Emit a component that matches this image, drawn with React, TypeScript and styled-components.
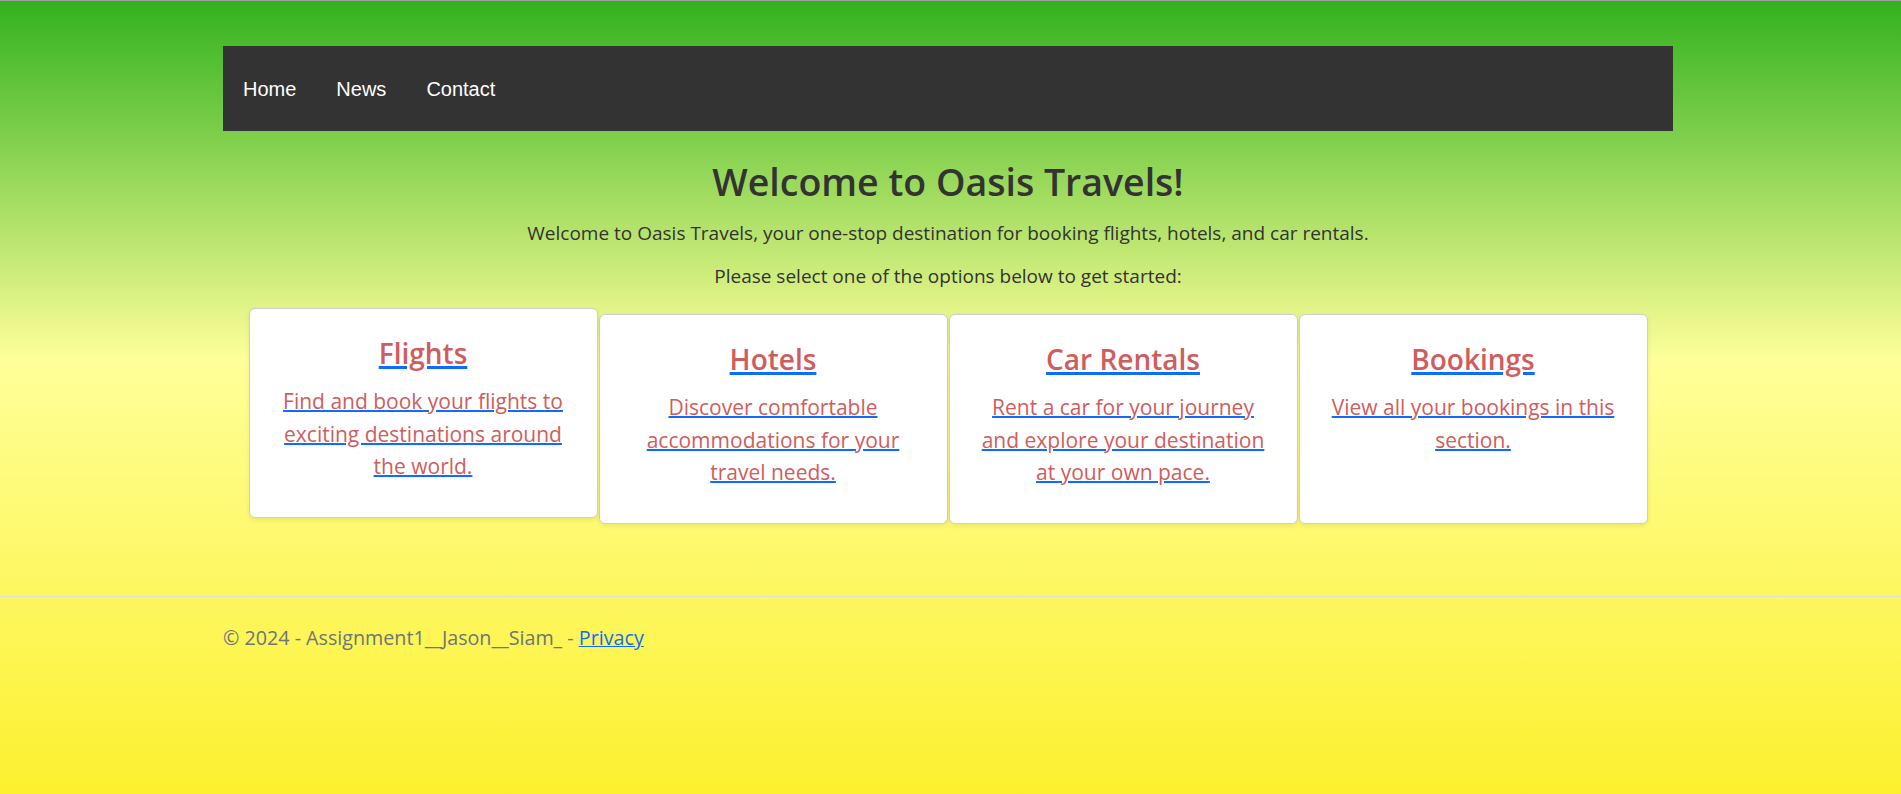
import React from "react";
import styled, { createGlobalStyle } from "styled-components";

const GlobalStyle = createGlobalStyle`
  html, body {
    margin: 0;
    padding: 0;
  }
  body {
    font-family: "Open Sans", "Noto Sans", sans-serif;
    color: #333333;
  }
  * { box-sizing: border-box; }
`;

const Page = styled.div`
  min-height: 100vh;
  border-top: 1px solid #9e9e9e;
  padding-right: 5px;
  background: linear-gradient(
    to bottom,
    #32b21e 0px,
    #ffff99 360px,
    #fcf02e 794px
  );
  display: flex;
  flex-direction: column;
`;

const Container = styled.div`
  width: 1450px;
  margin: 0 auto;
`;

const NavBar = styled.nav`
  margin-top: 45px;
  height: 85px;
  background: #333333;
  display: flex;
  align-items: center;
`;

const NavLink = styled.a`
  font-family: "Liberation Sans", Arial, sans-serif;
  font-size: 20px;
  color: #ffffff;
  text-decoration: none;
  padding: 2px 20px 0;
  line-height: 23px;
`;

const Main = styled.main`
  display: flex;
  flex-direction: column;
  align-items: center;
  text-align: center;
`;

const Heading = styled.h1`
  margin: 29px 0 0;
  font-size: 37.5px;
  line-height: 44px;
  font-weight: 600;
  color: #333333;
`;

const Lead = styled.p<{ $gap: number }>`
  margin: ${(p) => p.$gap}px 0 0;
  font-size: 19px;
  line-height: 27px;
  color: #333333;
`;

const CardRow = styled.div`
  margin-top: 24px;
  display: flex;
  align-items: stretch;
  gap: 1px;
`;

const Card = styled.a<{ $raised?: boolean }>`
  width: 349px;
  display: flex;
  flex-direction: column;
  align-items: center;
  padding: 27px 28px 34px;
  background: #ffffff;
  border: 1px solid #cfcfcf;
  border-radius: 6px;
  box-shadow: 0 2px 5px rgba(0, 0, 0, 0.08);
  text-decoration: none;
  transform: ${(p) => (p.$raised ? "translateY(-6px)" : "none")};
`;

const CardTitle = styled.h3`
  margin: 0 0 15px;
  font-size: 28px;
  line-height: 34px;
  font-weight: 600;
  color: #cf5d5d;
  text-decoration: underline;
  text-decoration-color: #0d6efd;
  text-decoration-thickness: 2.5px;
`;

const CardText = styled.p`
  margin: 0;
  font-size: 21px;
  line-height: 32.5px;
  color: #cf5d5d;
  text-decoration: underline;
  text-decoration-color: #0d6efd;
  text-decoration-thickness: 2px;
`;

const Footer = styled.footer`
  margin-top: 72px;
  border-top: 1px solid #dee2e6;
  margin-right: -5px;
  padding-right: 5px;
`;

const FooterInner = styled.div`
  width: 1450px;
  margin: 0 auto;
  padding-top: 27px;
  font-size: 19.7px;
  line-height: 27px;
  color: #6c757d;
`;

const FooterLink = styled.a`
  color: #0d6efd;
  text-decoration: underline;
`;

const cards = [
  {
    title: "Flights",
    text: "Find and book your flights to exciting destinations around the world.",
    raised: true,
  },
  {
    title: "Hotels",
    text: "Discover comfortable accommodations for your travel needs.",
  },
  {
    title: "Car Rentals",
    text: "Rent a car for your journey and explore your destination at your own pace.",
  },
  {
    title: "Bookings",
    text: "View all your bookings in this section.",
  },
];

export default function App() {
  return (
    <>
      <GlobalStyle />
      <Page>
        <Container>
          <NavBar>
            <NavLink href="#">Home</NavLink>
            <NavLink href="#">News</NavLink>
            <NavLink href="#">Contact</NavLink>
          </NavBar>
          <Main>
            <Heading>Welcome to Oasis Travels!</Heading>
            <Lead $gap={16}>
              Welcome to Oasis Travels, your one-stop destination for booking
              flights, hotels, and car rentals.
            </Lead>
            <Lead $gap={16}>
              Please select one of the options below to get started:
            </Lead>
            <CardRow>
              {cards.map((c) => (
                <Card key={c.title} href="#" $raised={c.raised}>
                  <CardTitle>{c.title}</CardTitle>
                  <CardText>{c.text}</CardText>
                </Card>
              ))}
            </CardRow>
          </Main>
        </Container>
        <Footer>
          <FooterInner>
            © 2024 - Assignment1__Jason__Siam_ -{" "}
            <FooterLink href="#">Privacy</FooterLink>
          </FooterInner>
        </Footer>
      </Page>
    </>
  );
}
